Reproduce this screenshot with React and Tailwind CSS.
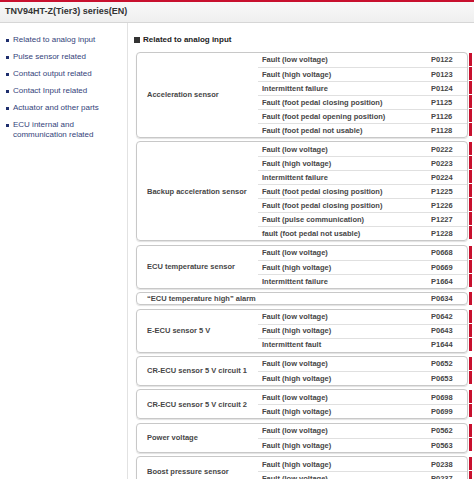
const nav = [
  "Related to analog input",
  "Pulse sensor related",
  "Contact output related",
  "Contact Input related",
  "Actuator and other parts",
  "ECU internal and communication related",
];

const groups = [
  {
    name: "Acceleration sensor",
    rows: [
      ["Fault (low voltage)", "P0122"],
      ["Fault (high voltage)", "P0123"],
      ["Intermittent failure", "P0124"],
      ["Fault (foot pedal closing position)", "P1125"],
      ["Fault (foot pedal opening position)", "P1126"],
      ["Fault (foot pedal not usable)", "P1128"],
    ],
  },
  {
    name: "Backup acceleration sensor",
    rows: [
      ["Fault (low voltage)", "P0222"],
      ["Fault (high voltage)", "P0223"],
      ["Intermittent failure", "P0224"],
      ["Fault (foot pedal closing position)", "P1225"],
      ["Fault (foot pedal closing position)", "P1226"],
      ["Fault (pulse communication)", "P1227"],
      ["fault (foot pedal not usable)", "P1228"],
    ],
  },
  {
    name: "ECU temperature sensor",
    rows: [
      ["Fault (low voltage)", "P0668"],
      ["Fault (high voltage)", "P0669"],
      ["Intermittent failure", "P1664"],
    ],
  },
  { single: "\u201cECU temperature high\u201d alarm", code: "P0634" },
  {
    name: "E-ECU sensor 5 V",
    rows: [
      ["Fault (low voltage)", "P0642"],
      ["Fault (high voltage)", "P0643"],
      ["Intermittent fault", "P1644"],
    ],
  },
  {
    name: "CR-ECU sensor 5 V circuit 1",
    rows: [
      ["Fault (low voltage)", "P0652"],
      ["Fault (high voltage)", "P0653"],
    ],
  },
  {
    name: "CR-ECU sensor 5 V circuit 2",
    rows: [
      ["Fault (low voltage)", "P0698"],
      ["Fault (high voltage)", "P0699"],
    ],
  },
  {
    name: "Power voltage",
    rows: [
      ["Fault (low voltage)", "P0562"],
      ["Fault (high voltage)", "P0563"],
    ],
  },
  {
    name: "Boost pressure sensor",
    rows: [
      ["Fault (high voltage)", "P0238"],
      ["Fault (low voltage)", "P0237"],
    ],
  },
];

const Group = ({ g }) => {
  if (g.single) {
    return (
      <div className="flex items-start">
        <div className="flex h-[13px] w-[332px] items-center rounded-[4px] border border-[#c8c8c8] shadow-[0_1px_1px_rgba(0,0,0,0.12)]">
          <span className="flex-1 pl-[10px]">{g.single}</span>
          <span className="w-[36px]">{g.code}</span>
        </div>
        <div className="ml-[1px] h-[13px] w-[3px] bg-[#c8102e]" />
      </div>
    );
  }
  return (
    <div className="flex items-start">
      <div className="flex w-[332px] rounded-[4px] border border-[#c8c8c8] shadow-[0_1px_1px_rgba(0,0,0,0.12)]">
        <div className="flex w-[121px] items-center pl-[10px]">{g.name}</div>
        <div className="flex flex-1 flex-col">
          {g.rows.map(([label, code], i) => (
            <div
              key={code}
              className={
                "flex h-[14px] items-center " + (i > 0 ? "border-t border-[#e0e0e0]" : "")
              }
            >
              <span className="flex-1 pl-[4px]">{label}</span>
              <span className="w-[36px]">{code}</span>
            </div>
          ))}
        </div>
      </div>
      <div className="ml-[1px] flex flex-col pt-[1px]">
        {g.rows.map(([, code]) => (
          <div key={code} className="mb-[1px] h-[13px] w-[3px] bg-[#c8102e]" />
        ))}
      </div>
    </div>
  );
};

export default function App() {
  return (
    <div className="h-[479px] w-[474px] overflow-hidden bg-white font-['Liberation_Sans',Arial,sans-serif]">
      <div className="h-[2px] bg-[#c8102e]" />
      <div className="flex h-[21px] items-center border-b border-[#d6d6d6] bg-gradient-to-b from-[#f8f8f8] to-[#efefef] pl-[5px] text-[9px] font-bold text-[#333]">
        TNV94HT-Z(Tier3) series(EN)
      </div>
      <div className="flex">
        <aside className="h-[460px] w-[128px] shrink-0 border-r border-[#e2e2e2] pt-[12px]">
          <ul className="flex flex-col gap-[7px]">
            {nav.map((n) => (
              <li key={n} className="flex items-start text-[8px] leading-[10px] text-[#34437a]">
                <span className="ml-[6px] mr-[4px] mt-[4px] h-[3px] w-[3px] shrink-0 bg-[#1f2f6e]" />
                <span className="w-[95px]">{n}</span>
              </li>
            ))}
          </ul>
        </aside>
        <main className="flex-1 pl-[6px] pt-[12px]">
          <h2 className="flex items-center text-[8px] font-bold leading-[10px] text-[#222]">
            <span className="mr-[3px] h-[6px] w-[6px] bg-[#333]" />
            Related to analog input
          </h2>
          <div className="ml-[2px] mt-[7px] flex flex-col gap-[3.4px] text-[7.5px] font-bold text-[#464646]">
            {groups.map((g, i) => (
              <Group key={i} g={g} />
            ))}
          </div>
        </main>
      </div>
    </div>
  );
}
